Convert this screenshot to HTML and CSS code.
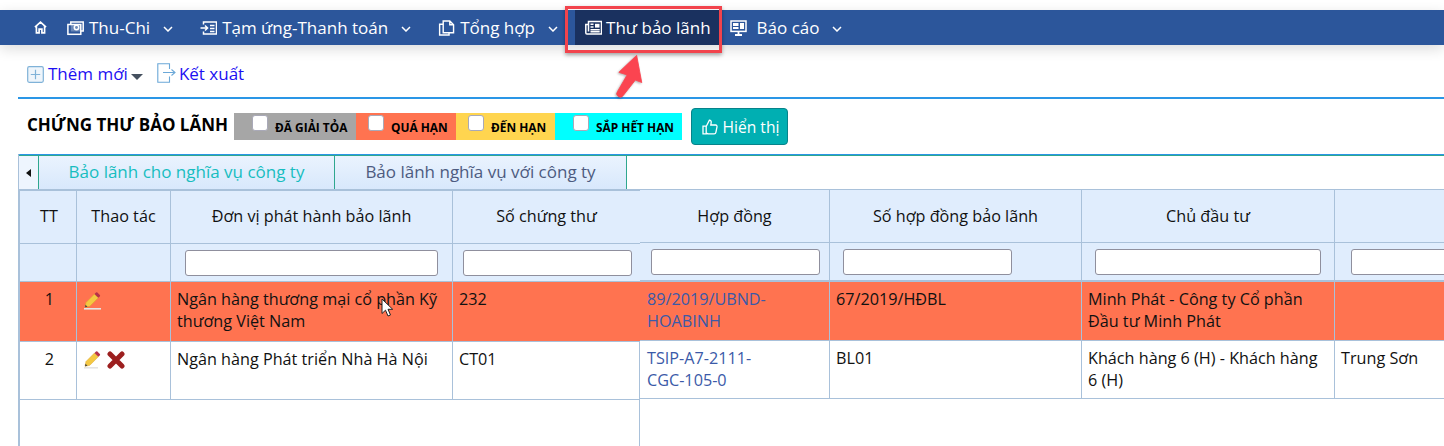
FILE: index.html
```html
<!DOCTYPE html>
<html lang="vi">
<head>
<meta charset="utf-8">
<title>Thư bảo lãnh</title>
<link rel="stylesheet" href="styles.css">
</head>
<body>
<div class="page">
  <nav class="nav">
    <a class="nav-item home"><svg class="ic-home" viewBox="0 0 14 14"><path d="M1 6.500 7 1.200l6 5.300M2.600 5.500v7.300h2.900V8.700h3v4.100h2.900V5.500" /></svg></a>
    <a class="nav-item thu"><svg class="ic" viewBox="0 0 17 15"><path d="M3.800 3.500V1.500h12.400v9H14"/><rect x=".9" y="4" width="12.900" height="9.800"/><rect x="3.800" y="4" width="10" height="7" fill="#fff" stroke="none" opacity=".3"/><circle cx="9.500" cy="7" r="2.200"/></svg><span>Thu-Chi</span><svg class="chev" viewBox="0 0 10 6"><path d="M1 1l4 4 4-4"/></svg></a>
    <a class="nav-item tam"><svg class="ic" viewBox="0 0 17 15"><path d="M3.500 4V1.500h13v12h-13V11M.5 7.500h7M5 5l2.600 2.500L5 10M10 5h4.500M10 8h4.500M10 11h4.500"/></svg><span>Tạm ứng-Thanh toán</span><svg class="chev" viewBox="0 0 10 6"><path d="M1 1l4 4 4-4"/></svg></a>
    <a class="nav-item tong"><svg class="ic" viewBox="0 0 17 17"><path d="M5 1h7l4 4v8.500H5zM12 1v4h4M5 4.500H1.200V16h10v-2.500"/></svg><span>Tổng hợp</span><svg class="chev" viewBox="0 0 10 6"><path d="M1 1l4 4 4-4"/></svg></a>
    <a class="nav-item active"><svg class="ic" viewBox="0 0 17 15"><path d="M3.500 11V1h13v12.500H2A1.400 1.400 0 0 1 .8 12V4h2.700"/><rect x="10" y="3.300" width="4.500" height="3.800" fill="#fff" stroke="none"/><path d="M5.500 3.800h3M5.500 6.500h3M5.500 9.200h9.200M5.500 11.300h9.200"/></svg><span>Thư bảo lãnh</span></a>
    <a class="nav-item bao"><svg class="ic" viewBox="0 0 17 16"><rect x="1" y="1" width="15" height="10.400"/><rect x="3" y="3" width="5.500" height="3" fill="#fff" stroke="none"/><rect x="10" y="3" width="4" height="6" fill="#fff" stroke="none"/><rect x="3" y="7" width="5.500" height="2" fill="#fff" stroke="none"/><path d="M8.500 11.500v3M5 15h7" stroke-width="1.800"/></svg><span>Báo cáo</span><svg class="chev" viewBox="0 0 10 6"><path d="M1 1l4 4 4-4"/></svg></a>
  </nav>

  <div class="toolbar">
    <a class="tool add"><svg class="ic-add" viewBox="0 0 17 17"><rect x=".7" y=".7" width="15.600" height="15.600" rx="1.500"/><path d="M8.500 3.800v9.400M3.800 8.500h9.400"/></svg><span>Thêm mới</span><i class="caret"></i></a>
    <a class="tool export"><svg class="ic-export" viewBox="0 0 19 20"><path d="M12.500 6V.8H.8v18.400h11.700V13.500M6 9.500h12M14.500 6.500l3.500 3-3.500 3"/></svg><span>Kết xuất</span></a>
  </div>

  <div class="filter-bar">
    <h1 class="title">CHỨNG THƯ BẢO LÃNH</h1>
    <div class="legend">
      <label class="lg grey"><input type="checkbox"><span>ĐÃ GIẢI TỎA</span></label>
      <label class="lg orange"><input type="checkbox"><span>QUÁ HẠN</span></label>
      <label class="lg yellow"><input type="checkbox"><span>ĐẾN HẠN</span></label>
      <label class="lg cyan"><input type="checkbox"><span>SẮP HẾT HẠN</span></label>
    </div>
    <button class="show-btn"><svg class="ic-thumb" viewBox="0 0 16 16"><path d="M1 7.200h3.200v7.600H1zM4.200 7.500 7.400 1.200c1.400 0 2 1 1.800 2.300L8.800 6h4.800c1 0 1.600.8 1.400 1.800l-1.100 5.600c-.2.900-.8 1.400-1.700 1.400H6.500c-1 0-1.500-.5-2.300-.8"/></svg>Hiển thị</button>
  </div>

  <div class="grid-box">
    <div class="tabs">
      <span class="tab-nav"><i class="tab-arrow"></i></span>
      <a class="tab on">Bảo lãnh cho nghĩa vụ công ty</a>
      <a class="tab off">Bảo lãnh nghĩa vụ với công ty</a>
    </div>
    <div class="panes">
      <div class="pane frozen">
        <table class="tbl tbl-left">
          <colgroup><col class="c-tt"><col class="c-act"><col class="c-dv"><col class="c-so"></colgroup>
          <tr class="head"><th>TT</th><th>Thao tác</th><th>Đơn vị phát hành bảo lãnh</th><th>Số chứng thư</th></tr>
          <tr class="filter"><th></th><th></th><th><input class="fi fi-dv" type="text"></th><th><input class="fi fi-so" type="text"></th></tr>
          <tr class="row r1 late">
            <td class="tc">1</td>
            <td class="act"><svg class="pen" viewBox="0 0 18 18"><path d="M0 16.800h17" stroke="#e4e4e4" stroke-width="1.600"/><path d="M1 15.300 2 10.500 10.500 2l3.800 3.800L5.800 14.300z" fill="#f4c842" stroke="#dba326" stroke-width=".5"/><path d="M10.500 2 12 .5a1 1 0 0 1 1.400 0l2.400 2.400a1 1 0 0 1 0 1.400l-1.500 1.500z" fill="#b5304a"/><path d="M1 15.300l.5-2.500 2 2z" fill="#444"/></svg></td>
            <td>Ngân hàng thương mại cổ phần Kỹ thương Việt Nam</td>
            <td>232</td>
          </tr>
          <tr class="row r2">
            <td class="tc">2</td>
            <td class="act"><svg class="pen" viewBox="0 0 18 18"><path d="M0 16.800h14" stroke="#e4e4e4" stroke-width="1.600"/><path d="M1 15.300 2 10.500 10.500 2l3.800 3.800L5.800 14.300z" fill="#f4c842" stroke="#dba326" stroke-width=".5"/><path d="M10.500 2 12 .5a1 1 0 0 1 1.400 0l2.400 2.400a1 1 0 0 1 0 1.400l-1.500 1.500z" fill="#b5304a"/><path d="M1 15.300l.5-2.500 2 2z" fill="#444"/></svg><svg class="del" viewBox="0 0 18 18"><path d="M3 3l12 12M15 3 3 15" stroke="#9c1f1f" stroke-width="5" stroke-linecap="round"/></svg></td>
            <td>Ngân hàng Phát triển Nhà Hà Nội</td>
            <td>CT01</td>
          </tr>
        </table>
      </div>
      <div class="pane scroll">
        <table class="tbl tbl-right">
          <colgroup><col class="c-hd"><col class="c-shd"><col class="c-cdt"><col class="c-x"></colgroup>
          <tr class="head"><th>Hợp đồng</th><th>Số hợp đồng bảo lãnh</th><th>Chủ đầu tư</th><th></th></tr>
          <tr class="filter"><th><input class="fi fi-hd" type="text"></th><th><input class="fi fi-shd" type="text"></th><th><input class="fi fi-cdt" type="text"></th><th><input class="fi fi-x" type="text"></th></tr>
          <tr class="row r1 late"><td><a class="lnk">89/2019/UBND-HOABINH</a></td><td>67/2019/HĐBL</td><td>Minh Phát - Công ty Cổ phần Đầu tư Minh Phát</td><td></td></tr>
          <tr class="row r2"><td><a class="lnk">TSIP-A7-2111-CGC-105-0</a></td><td>BL01</td><td>Khách hàng 6 (H) - Khách hàng 6 (H)</td><td>Trung Sơn</td></tr>
        </table>
      </div>
    </div>
  </div>

  <div class="callout"></div>
  <svg class="arrow" viewBox="0 0 40 60"><path d="M29 1 35 33 27.500 30 13 48.500A4 4 0 0 1 6.500 43.500L17.800 24 8 21z" fill="#fb4450" stroke="#fb4450" stroke-linejoin="round"/></svg>
  <svg class="cursor" viewBox="0 0 12 19"><path d="M1 1v14.500l3.500-3.300 2.500 5.800 2.500-1-2.500-5.700h4.700z" fill="#fff" stroke="#222" stroke-width="1"/></svg>
</div>
</body>
</html>
```
FILE: styles.css
```css
* { box-sizing: border-box; }
html, body { margin: 0; padding: 0; background: #fff; }
body { font-family: "Open Sans", "Noto Sans", sans-serif; color: #111; font-size: 16.200px; }
.page { position: relative; width: 1444px; height: 446px; overflow: hidden; padding-top: 10px; }

/* nav */
.nav { display: flex; align-items: stretch; height: 35px; padding-left: 34px; background: #2c569b; color: #fff; box-shadow: 0 4px 14px rgba(0,0,0,.14); font-size: 17px; position: relative; }
.nav-item { display: flex; align-items: center; height: 100%; }
.nav-item svg { fill: none; stroke: #fff; stroke-width: 1.500; }
.ic { width: 17px; height: 16px; margin-right: 5px; flex: none; }
.ic-home { width: 13px; height: 13px; stroke-width: 1.800 !important; }
.chev { width: 10px; height: 6px; margin-left: 13px; margin-top: 2px; stroke-width: 1.500 !important; }
.thu { margin-left: 20px; }
.tam, .tong { margin-left: 27px; }
.active { margin-left: 17px; padding: 0 10px; background: #1a315f; }
.active .ic { margin-right: 4px; }
.bao { margin-left: 9px; }
.bao .ic { margin-right: 10px; }

/* toolbar */
.toolbar { display: flex; align-items: flex-start; height: 54px; margin-left: 18px; padding: 18px 0 0 9px; border-bottom: 2px solid #2a96e6; color: #1c10f2; font-size: 17px; }
.tool { display: flex; align-items: center; height: 22px; line-height: 22px; }
.ic-add { width: 17px; height: 17px; margin-right: 4px; fill: #eef5fb; stroke: #7fb2d8; stroke-width: 1.200; }
.ic-export { width: 19px; height: 20px; margin-right: 3px; fill: none; stroke: #6ba8d8; stroke-width: 1.100; margin-top: -3px; }
.caret { width: 0; height: 0; margin: 5px 0 0 3px; border-style: solid; border-width: 6px 6px 0; border-color: #45505f transparent transparent; }
.export { margin-left: 14px; }

/* title row */
.filter-bar { display: flex; align-items: flex-start; height: 55px; margin-left: 18px; padding: 9px 0 0 9px; }
.title { margin: 0; font-size: 17px; line-height: 34px; font-weight: 700; color: #000; white-space: nowrap; }
.legend { display: flex; height: 27px; margin: 5px 0 0 6px; font-size: 11.900px; font-weight: 700; color: #000; }
.lg { display: flex; align-items: flex-start; line-height: 28px; padding-left: 18px; }
.lg input { appearance: none; width: 16px; height: 16px; margin: 2px 7px 0 0; background: #fff; border: 1px solid #a9a9b8; border-radius: 3px; }
.lg span { white-space: nowrap; }
.grey { width: 122px; background: #a6a6a6; }
.orange { width: 100px; padding-left: 12px; background: #ff7350; }
.yellow { width: 99px; padding-left: 12px; background: #ffd54f; }
.cyan { width: 127px; background: #00ffff; }
.show-btn { display: flex; align-items: center; justify-content: center; width: 97px; height: 37px; margin-left: 9px; padding: 0 0 0 2px; border: 1px solid #07838a; border-radius: 4px; background: #00afb2; color: #fff; font: 15.600px "Open Sans", sans-serif; }
.ic-thumb { width: 16px; height: 16px; margin-right: 5px; fill: none; stroke: #fff; stroke-width: 1.300; }

/* grid */
.grid-box { margin-left: 18px; border-top: 1px solid #2a96e6; border-left: 2px solid #a9c1da; height: 292px; }
.tabs { display: flex; height: 34px; border-top: 1px solid #2fa78f; margin-left: -1px; }
.tab-nav { display: flex; align-items: center; justify-content: center; width: 19px; background: #eef5fe; }
.tab-arrow { width: 0; height: 0; border-style: solid; border-width: 4.500px 5px 4.500px 0; border-color: transparent #111 transparent transparent; }
.tab { display: flex; align-items: center; justify-content: center; padding-bottom: 3px; font-size: 17px; background: linear-gradient(#eaf3fe, #d8e8fc); border-left: 1px solid #2fa78f; }
.tab.on { width: 296px; color: #17bdc0; }
.tab.off { width: 293px; color: #4d5b80; border-right: 1px solid #2fa78f; }
.panes { display: flex; height: 257px; }
.pane { height: 100%; }
.frozen { width: 620px; flex: none; border-right: 1px solid #a9c1da; }
.scroll { flex: 1; min-width: 0; overflow: hidden; }
.tbl { table-layout: fixed; border-collapse: separate; border-spacing: 0; }
.tbl-left { width: 620px; }
.tbl-right { width: 1010px; }
.c-tt { width: 57px; } .c-act { width: 94px; } .c-dv { width: 282px; } .c-so { width: 187px; }
.c-hd { width: 190px; } .c-shd { width: 252px; } .c-cdt { width: 253px; } .c-x { width: 315px; }
th, td { padding: 0; border-right: 1px solid #a9c1da; border-bottom: 1px solid #a9c1da; font-size: 16.200px; line-height: 22px; }
th { font-weight: 400; text-align: center; background: #e0edfd; color: #111; }
.tbl-left .head th { border-top: 2px solid #a9c1da; height: 55px; padding-bottom: 3px; }
.tbl-left .head th:first-child { padding-left: 2px; }
.tbl-left .filter th { height: 38px; }
.tbl-left .r1 td { height: 60px; }
.tbl-left .r2 td { height: 58px; }
.tbl-left th:last-child, .tbl-left td:last-child { border-right: 0; }
.tbl-right .head th { border-top: 1px solid #a9c1da; height: 54px; padding-bottom: 1px; }
.tbl-right .filter th { height: 39px; border-bottom: 2px solid #a9c1da; }
.tbl-right .r1 td { height: 59px; }
.tbl-right .r2 td { height: 58px; }
td { vertical-align: top; padding: 6px 7px 0 6px; }
td.tc { text-align: center; padding-left: 3px; padding-right: 0; }
.late td { background: #ff7350; }
td.act { padding: 9px 0 0 7px; }
.r1 td.act { padding-top: 10px; }
.pen { width: 18px; height: 18px; }
.del { width: 18px; height: 18px; margin-left: 5px; }
.lnk { color: #3b5aa8; }
.tbl-right td:first-child { padding: 6px 50px 0 7px; }
.fi { display: block; height: 26px; margin: 0 auto; border: 1px solid #8f8f9d; border-radius: 3px; background: #fff; padding: 0; }
.fi-dv { width: 253px; margin-left: 14px; }
.fi-so { width: 169px; margin-left: 10px; }
.fi-hd { width: 169px; margin-left: 11px; }
.fi-shd { width: 169px; margin-left: 13px; }
.fi-cdt { width: 226px; margin-left: 13px; }
.fi-x { width: 260px; margin-left: 16px; }

/* overlays */
.callout { position: absolute; left: 565px; top: 6px; width: 157px; height: 47px; border: 3px solid #f2434c; box-shadow: 0 2px 4px rgba(0,0,0,.35); }
.arrow { position: absolute; left: 612px; top: 54px; width: 34px; height: 52px; filter: drop-shadow(-1px 1px 1px rgba(0,0,0,.3)); }
.cursor { position: absolute; left: 381px; top: 298px; width: 12px; height: 19px; }
```
